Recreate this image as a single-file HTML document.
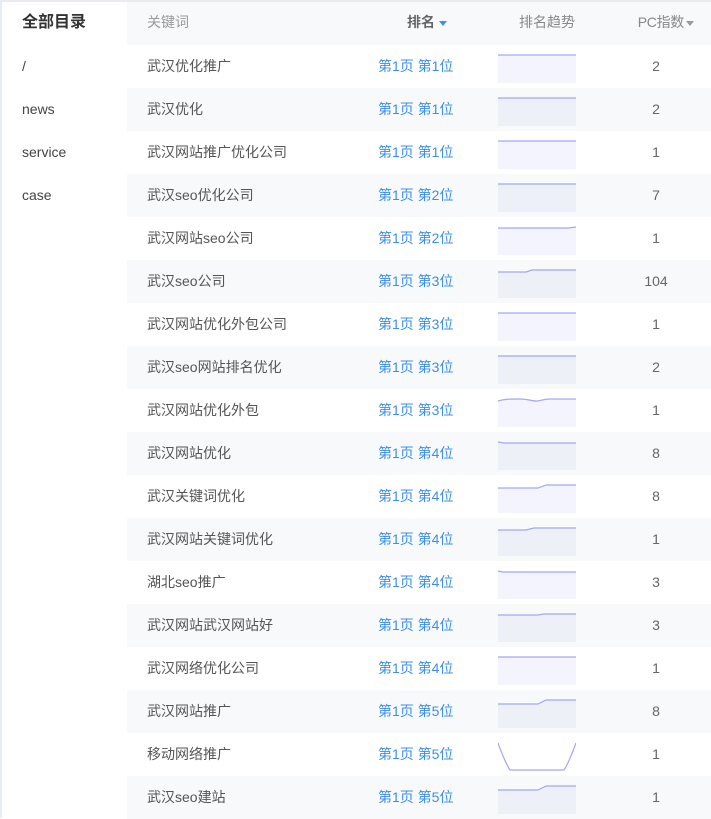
<!DOCTYPE html>
<html><head><meta charset="utf-8"><style>
*{margin:0;padding:0;box-sizing:border-box}
body{width:711px;height:818px;overflow:hidden;background:#fff;font-family:"Liberation Sans","Noto Sans CJK SC",sans-serif;font-size:14px;color:#555;position:relative}
.lb{position:absolute;left:0;top:0;width:2px;height:818px;background:#e6edf5}
.tb{position:absolute;left:0;top:0;width:711px;height:2px;background:#e8ecf1}
.side{position:absolute;left:2px;top:2px;width:125px}
.side div{height:43px;line-height:42px;padding-left:20px;color:#444}
.side .h{font-size:16px;font-weight:bold;color:#333;line-height:41px}
.tbl{position:absolute;left:127px;top:2px;width:584px}
.r{height:43px;position:relative;background:#fff}
.r.g{background:#f8f9fb}
.r.hd{height:43px;background:#f8f9fb;color:#999}
.k{position:absolute;left:20px;top:0;line-height:43px}
.hd .k,.hd .p,.hd .t,.hd .n{line-height:41px}
.p{position:absolute;left:251px;top:0;line-height:43px;color:#3d8fe8}
.hd .p{left:280px;color:#666;font-weight:bold}
.t{position:absolute;left:392px;line-height:41px;color:#888}
.n{position:absolute;left:489px;width:80px;top:0;line-height:43px;color:#666;text-align:center}
.hd .n{left:auto;width:auto;right:17px;color:#888;letter-spacing:-0.3px}
.tri{display:inline-block;width:0;height:0;border-left:4px solid transparent;border-right:4px solid transparent;border-top:5px solid #3d8fe8;vertical-align:middle;margin-left:4px}
.tri.gy{border-top-color:#999;margin-left:2px}
svg{position:absolute;left:371px;top:9px}
</style></head><body>
<div class="lb"></div><div class="tb"></div>
<div class="side">
<div class="h">全部目录</div><div>/</div><div>news</div><div>service</div><div>case</div>
</div>
<div class="tbl">
<div class="r hd"><span class="k">关键词</span><span class="p">排名<i class="tri"></i></span><span class="t">排名趋势</span><span class="n">PC指数<i class="tri gy"></i></span></div>

<div class="r"><span class="k">武汉优化推广</span><span class="p">第1页 第1位</span><svg width="78" height="29"><path d="M0 1H78V29H0Z" fill="#f3f4fd"/><path d="M0 1H78" stroke="#a3a8ef" stroke-width="1.2" fill="none"/></svg><span class="n">2</span></div>
<div class="r g"><span class="k">武汉优化</span><span class="p">第1页 第1位</span><svg width="78" height="29"><path d="M0 1H78V29H0Z" fill="#eef0f8"/><path d="M0 1H78" stroke="#a3a8ef" stroke-width="1.2" fill="none"/></svg><span class="n">2</span></div>
<div class="r"><span class="k">武汉网站推广优化公司</span><span class="p">第1页 第1位</span><svg width="78" height="29"><path d="M0 1H78V29H0Z" fill="#f3f4fd"/><path d="M0 1H78" stroke="#a3a8ef" stroke-width="1.2" fill="none"/></svg><span class="n">1</span></div>
<div class="r g"><span class="k">武汉seo优化公司</span><span class="p">第1页 第2位</span><svg width="78" height="29"><path d="M0 1H78V29H0Z" fill="#eef0f8"/><path d="M0 1H78" stroke="#a3a8ef" stroke-width="1.2" fill="none"/></svg><span class="n">7</span></div>
<div class="r"><span class="k">武汉网站seo公司</span><span class="p">第1页 第2位</span><svg width="78" height="29"><path d="M0 2H70L78 1V29H0Z" fill="#f3f4fd"/><path d="M0 2H70L78 1" stroke="#a3a8ef" stroke-width="1.2" fill="none"/></svg><span class="n">1</span></div>
<div class="r g"><span class="k">武汉seo公司</span><span class="p">第1页 第3位</span><svg width="78" height="29"><path d="M0 3H28L34 1H78V29H0Z" fill="#eef0f8"/><path d="M0 3H28L34 1H78" stroke="#a3a8ef" stroke-width="1.2" fill="none"/></svg><span class="n">104</span></div>
<div class="r"><span class="k">武汉网站优化外包公司</span><span class="p">第1页 第3位</span><svg width="78" height="29"><path d="M0 1H78V29H0Z" fill="#f3f4fd"/><path d="M0 1H78" stroke="#a3a8ef" stroke-width="1.2" fill="none"/></svg><span class="n">1</span></div>
<div class="r g"><span class="k">武汉seo网站排名优化</span><span class="p">第1页 第3位</span><svg width="78" height="29"><path d="M0 1H78V29H0Z" fill="#eef0f8"/><path d="M0 1H78" stroke="#a3a8ef" stroke-width="1.2" fill="none"/></svg><span class="n">2</span></div>
<div class="r"><span class="k">武汉网站优化外包</span><span class="p">第1页 第3位</span><svg width="78" height="29"><path d="M0 3C6 1 12 1 22 1C30 1 34 3 38 3C42 3 46 1 52 1H78V29H0Z" fill="#f3f4fd"/><path d="M0 3C6 1 12 1 22 1C30 1 34 3 38 3C42 3 46 1 52 1H78" stroke="#a3a8ef" stroke-width="1.2" fill="none"/></svg><span class="n">1</span></div>
<div class="r g"><span class="k">武汉网站优化</span><span class="p">第1页 第4位</span><svg width="78" height="29"><path d="M0 1L6 2H78V29H0Z" fill="#eef0f8"/><path d="M0 1L6 2H78" stroke="#a3a8ef" stroke-width="1.2" fill="none"/></svg><span class="n">8</span></div>
<div class="r"><span class="k">武汉关键词优化</span><span class="p">第1页 第4位</span><svg width="78" height="29"><path d="M0 4H40L48 1H78V29H0Z" fill="#f3f4fd"/><path d="M0 4H40L48 1H78" stroke="#a3a8ef" stroke-width="1.2" fill="none"/></svg><span class="n">8</span></div>
<div class="r g"><span class="k">武汉网站关键词优化</span><span class="p">第1页 第4位</span><svg width="78" height="29"><path d="M0 3H28L36 1H78V29H0Z" fill="#eef0f8"/><path d="M0 3H28L36 1H78" stroke="#a3a8ef" stroke-width="1.2" fill="none"/></svg><span class="n">1</span></div>
<div class="r"><span class="k">湖北seo推广</span><span class="p">第1页 第4位</span><svg width="78" height="29"><path d="M0 1L5 2H78V29H0Z" fill="#f3f4fd"/><path d="M0 1L5 2H78" stroke="#a3a8ef" stroke-width="1.2" fill="none"/></svg><span class="n">3</span></div>
<div class="r g"><span class="k">武汉网站武汉网站好</span><span class="p">第1页 第4位</span><svg width="78" height="29"><path d="M0 2H40L46 1H78V29H0Z" fill="#eef0f8"/><path d="M0 2H40L46 1H78" stroke="#a3a8ef" stroke-width="1.2" fill="none"/></svg><span class="n">3</span></div>
<div class="r"><span class="k">武汉网络优化公司</span><span class="p">第1页 第4位</span><svg width="78" height="29"><path d="M0 1H78V29H0Z" fill="#f3f4fd"/><path d="M0 1H78" stroke="#a3a8ef" stroke-width="1.2" fill="none"/></svg><span class="n">1</span></div>
<div class="r g"><span class="k">武汉网站推广</span><span class="p">第1页 第5位</span><svg width="78" height="29"><path d="M0 5H40L48 1H78V29H0Z" fill="#eef0f8"/><path d="M0 5H40L48 1H78" stroke="#a3a8ef" stroke-width="1.2" fill="none"/></svg><span class="n">8</span></div>
<div class="r"><span class="k">移动网络推广</span><span class="p">第1页 第5位</span><svg width="78" height="29"><path d="M0 1C4 12 8 22 12 28H66C70 22 74 12 78 1" stroke="#a3a8ef" stroke-width="1.2" fill="none"/></svg><span class="n">1</span></div>
<div class="r g"><span class="k">武汉seo建站</span><span class="p">第1页 第5位</span><svg width="78" height="29"><path d="M0 5H40L48 1H78V29H0Z" fill="#eef0f8"/><path d="M0 5H40L48 1H78" stroke="#a3a8ef" stroke-width="1.2" fill="none"/></svg><span class="n">1</span></div>
</div>
</body></html>
